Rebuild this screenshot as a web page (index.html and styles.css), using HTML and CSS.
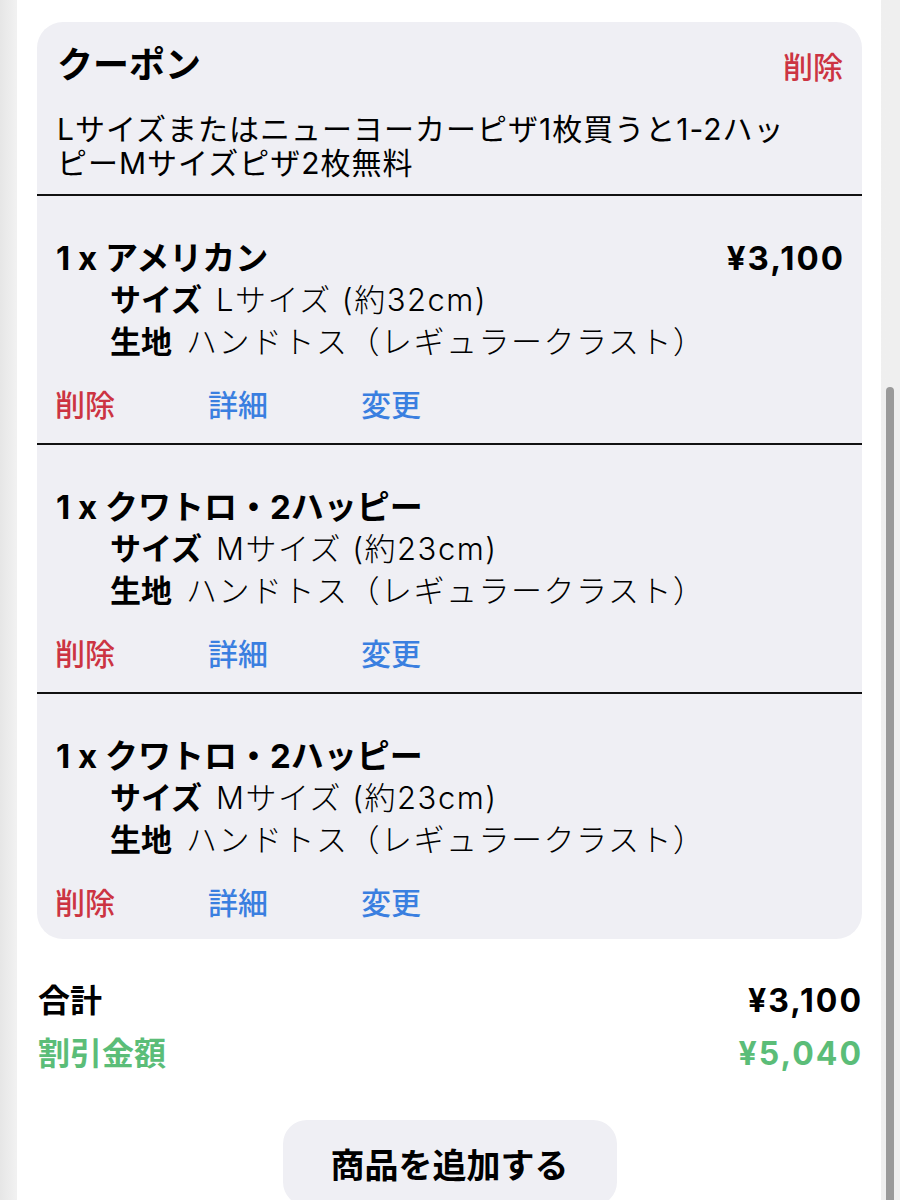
FILE: index.html
```html
<!DOCTYPE html>
<html lang="ja">
<head>
<meta charset="utf-8">
<title>カート</title>
<link rel="stylesheet" href="styles.css">
</head>
<body>
<div class="page">
  <main class="panel">
    <section class="card">
      <div class="coupon">
        <div class="coupon-head">
          <h2 class="coupon-title">クーポン</h2>
          <a class="link red">削除</a>
        </div>
        <p class="coupon-desc">Lサイズまたはニューヨーカーピザ1枚買うと1-2ハッピーMサイズピザ2枚無料</p>
      </div>

      <div class="item">
        <div class="item-head">
          <span class="item-name">1 x アメリカン</span>
          <span class="item-price">¥3,100</span>
        </div>
        <div class="opt"><b>サイズ</b><span>Lサイズ (約32cm)</span></div>
        <div class="opt"><b>生地</b><span>ハンドトス（レギュラークラスト）</span></div>
        <div class="actions">
          <a class="link red">削除</a>
          <a class="link blue">詳細</a>
          <a class="link blue">変更</a>
        </div>
      </div>

      <div class="item">
        <div class="item-head">
          <span class="item-name">1 x クワトロ・2ハッピー</span>
        </div>
        <div class="opt"><b>サイズ</b><span>Mサイズ (約23cm)</span></div>
        <div class="opt"><b>生地</b><span>ハンドトス（レギュラークラスト）</span></div>
        <div class="actions">
          <a class="link red">削除</a>
          <a class="link blue">詳細</a>
          <a class="link blue">変更</a>
        </div>
      </div>

      <div class="item">
        <div class="item-head">
          <span class="item-name">1 x クワトロ・2ハッピー</span>
        </div>
        <div class="opt"><b>サイズ</b><span>Mサイズ (約23cm)</span></div>
        <div class="opt"><b>生地</b><span>ハンドトス（レギュラークラスト）</span></div>
        <div class="actions">
          <a class="link red">削除</a>
          <a class="link blue">詳細</a>
          <a class="link blue">変更</a>
        </div>
      </div>
    </section>

    <div class="totals">
      <div class="total-row"><span>合計</span><span class="amount">¥3,100</span></div>
      <div class="total-row green"><span>割引金額</span><span class="amount">¥5,040</span></div>
    </div>

    <div class="btn-wrap">
      <button class="add-btn">商品を追加する</button>
    </div>
  </main>
  <div class="scroll-track"><div class="scroll-thumb"></div></div>
</div>
</body>
</html>
```

FILE: styles.css
```css
* { box-sizing: border-box; }
html, body {
  margin: 0;
  padding: 0;
  height: 1200px;
  overflow: hidden;
  background: #efefef;
  font-family: "Inter", "Noto Sans CJK JP", "Noto Sans", sans-serif;
  color: #000;
}
.page {
  display: flex;
  height: 1200px;
  background: linear-gradient(to right, #e6e6e6 0, #f1f1f1 16px, #efefef 100%);
  position: relative;
}
.panel {
  margin-left: 17px;
  width: 864px;
  background: #fff;
  padding: 22px 19px 0 20px;
  height: 1200px;
}
.card {
  background: #efeff4;
  border-radius: 26px;
  overflow: hidden;
}
.coupon {
  padding: 20px 19px 14px 20px;
  border-bottom: 2px solid #111;
}
.coupon-head {
  display: flex;
  justify-content: space-between;
  align-items: center;
  height: 46px;
}
.coupon-title {
  margin: 0;
  font-size: 36px;
  font-weight: 700;
  line-height: 46px;
}
.coupon-head .link { font-size: 30px; }
.coupon-desc {
  margin: 24px 0 0;
  font-size: 30px;
  line-height: 34px;
  font-weight: 400;
  letter-spacing: 1px;
  max-width: 740px;
}
.item {
  padding: 41px 19px 17px 19px;
  border-bottom: 2px solid #111;
}
.item:last-child { border-bottom: none; padding-bottom: 15px; }
.item-head {
  display: flex;
  justify-content: space-between;
  font-size: 33px;
  font-weight: 700;
  line-height: 42px;
}
.item-price { letter-spacing: 2px; margin-right: -2px; }
.opt {
  padding-left: 54px;
  font-size: 31px;
  line-height: 42px;
}
.opt b { font-weight: 700; }
.opt span { font-weight: 300; margin-left: 14px; letter-spacing: 1.5px; }
.actions {
  display: grid;
  grid-template-columns: 153px 153px 153px;
  margin-top: 21px;
  margin-left: -1px;
  line-height: 42px;
  font-size: 30px;
}
.link { text-decoration: none; font-weight: 500; }
.red { color: #cc3442; }
.blue { color: #3a7fe0; }
.totals {
  margin-top: 35px;
  padding: 0 1px;
}
.total-row {
  display: flex;
  justify-content: space-between;
  font-size: 32px;
  font-weight: 700;
  line-height: 53px;
}
.amount { letter-spacing: 2px; margin-right: -2px; }
.total-row.green { color: #5bbd78; }
.btn-wrap {
  display: flex;
  justify-content: center;
  margin-top: 40px;
}
.add-btn {
  width: 334px;
  height: 86px;
  border: none;
  border-radius: 24px;
  background: #efeff4;
  font-family: inherit;
  font-size: 34px;
  font-weight: 700;
  color: #000;
}
.scroll-track {
  position: absolute;
  right: 6px;
  top: 387px;
  width: 8px;
  bottom: 0;
}
.scroll-thumb {
  width: 8px;
  height: 100%;
  background: #9a9a9a;
  border-radius: 4px 4px 0 0;
}
```
